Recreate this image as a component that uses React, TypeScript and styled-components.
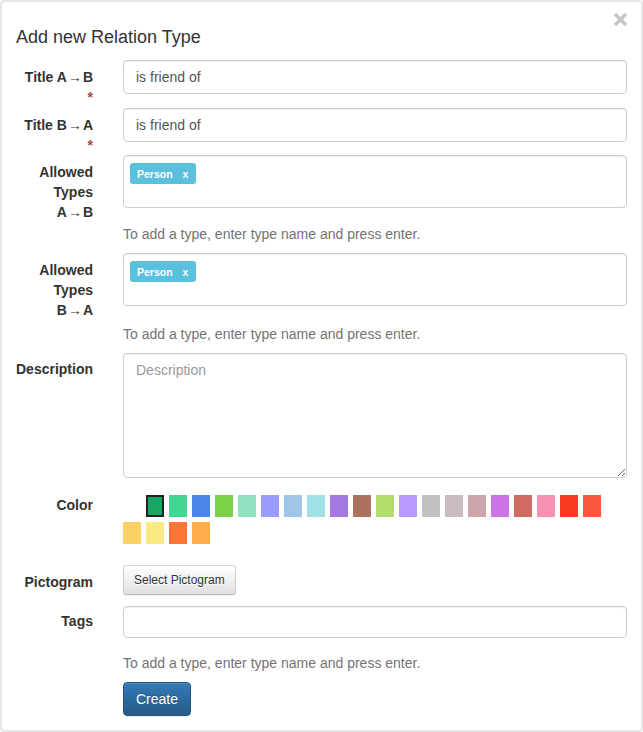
import React from "react";
import styled, { createGlobalStyle } from "styled-components";

const GlobalStyle = createGlobalStyle`
  html, body { margin: 0; padding: 0; background: #fff; }
  body {
    font-family: "Liberation Sans", Arial, Helvetica, sans-serif;
    font-size: 14px;
    line-height: 20px;
    color: #333;
  }
  * { box-sizing: border-box; }
`;

const Modal = styled.div`
  width: 643px;
  border: 2px solid #e6e6e6;
  border-radius: 4px;
  background: #fff;
  padding: 0 14px 14px 14px;
`;

const Header = styled.div`
  display: flex;
  flex-direction: column;
`;

const CloseButton = styled.button`
  align-self: flex-end;
  margin: 10px -1px 0 0;
  padding: 0;
  border: 0;
  background: transparent;
  width: 15px;
  height: 15px;
  display: flex;
  cursor: pointer;
`;

const Title = styled.h4`
  margin: 0;
  font-size: 18px;
  font-weight: 400;
  line-height: 20px;
  color: #333;
`;

const Form = styled.form`
  margin-top: 13px;
  display: flex;
  flex-direction: column;
`;

const Row = styled.div<{ $mb: number }>`
  display: grid;
  grid-template-columns: 77px 1fr;
  column-gap: 30px;
  margin-bottom: ${(p) => p.$mb}px;
`;

const Label = styled.label<{ $pt: number }>`
  display: block;
  padding-top: ${(p) => p.$pt}px;
  text-align: right;
  font-weight: 700;
  font-size: 14px;
  line-height: 20px;
  color: #333;
`;

const Direction = styled.span`
  white-space: nowrap;
`;

const Arrow = styled.span`
  padding: 0 1px;
`;

const Required = styled.span`
  display: block;
  color: #a94442;
  font-weight: 700;
`;

const Field = styled.div`
  display: flex;
  flex-direction: column;
  min-width: 0;
`;

const TextInput = styled.input<{ $h?: number }>`
  width: 100%;
  height: ${(p) => p.$h ?? 34}px;
  padding: 6px 12px;
  font-family: inherit;
  font-size: 14px;
  color: #555;
  background: #fff;
  border: 1px solid #ccc;
  border-radius: 4px;
  box-shadow: inset 0 1px 1px rgba(0, 0, 0, 0.075);
  outline: none;
`;

const TextArea = styled.textarea`
  width: 100%;
  height: 125px;
  padding: 6px 12px;
  font-family: inherit;
  font-size: 14px;
  line-height: 20px;
  color: #555;
  border: 1px solid #ccc;
  border-radius: 4px;
  box-shadow: inset 0 1px 1px rgba(0, 0, 0, 0.075);
  outline: none;
  resize: vertical;
  display: block;
  &::placeholder { color: #999; }
`;

const TagBox = styled.div`
  height: 53px;
  border: 1px solid #ccc;
  border-radius: 4px;
  box-shadow: inset 0 1px 1px rgba(0, 0, 0, 0.075);
  padding: 7px 6px;
  display: flex;
  align-items: flex-start;
  flex-wrap: wrap;
`;

const Tag = styled.span`
  display: inline-flex;
  align-items: center;
  height: 21px;
  padding: 0 8px 0 7px;
  background: #5bc0de;
  color: #fff;
  font-size: 10.5px;
  font-weight: 700;
  border-radius: 3px;
`;

const TagRemove = styled.span`
  margin-left: 10px;
  font-weight: 700;
`;

const Help = styled.p<{ $mt: number }>`
  margin: ${(p) => p.$mt}px 0 0 0;
  color: #737373;
  font-size: 14px;
  line-height: 20px;
`;

const Swatches = styled.div`
  display: flex;
  flex-wrap: wrap;
`;

const Swatch = styled.span<{ $color: string; $selected?: boolean }>`
  width: 18px;
  height: 22px;
  margin: 0 5px 5px 0;
  background: ${(p) => p.$color};
  box-shadow: ${(p) => (p.$selected ? "inset 0 0 0 2px #222" : "none")};
  cursor: pointer;
`;

const DefaultButton = styled.button`
  align-self: flex-start;
  height: 30px;
  padding: 5px 10px;
  font-family: inherit;
  font-size: 12px;
  line-height: 18px;
  color: #333;
  background: linear-gradient(to bottom, #fff 0, #e0e0e0 100%);
  border: 1px solid #ccc;
  border-color: #dbdbdb #ccc #bbb;
  border-radius: 3px;
  text-shadow: 0 1px 0 #fff;
  box-shadow: inset 0 1px 0 rgba(255, 255, 255, 0.15), 0 1px 1px rgba(0, 0, 0, 0.075);
  cursor: pointer;
`;

const PrimaryButton = styled.button`
  align-self: flex-start;
  margin-top: 9px;
  height: 34px;
  padding: 6px 12px;
  font-family: inherit;
  font-size: 14px;
  line-height: 20px;
  color: #fff;
  background: linear-gradient(to bottom, #337ab7 0, #265a88 100%);
  border: 1px solid #245580;
  border-radius: 4px;
  text-shadow: 0 -1px 0 rgba(0, 0, 0, 0.2);
  box-shadow: inset 0 1px 0 rgba(255, 255, 255, 0.15), 0 1px 1px rgba(0, 0, 0, 0.075);
  cursor: pointer;
`;

const COLORS = [
  "transparent",
  "#16a765", "#42d692", "#4986e7", "#7bd148", "#92e1c0", "#9a9cff", "#9fc6e7",
  "#9fe1e7", "#a47ae2", "#ac725e", "#b3dc6c", "#b99aff", "#c2c2c2", "#cabdbf",
  "#cca6ac", "#cd74e6", "#d06b64", "#f691b2", "#f83a22", "#fa573c", "#fad165",
  "#fbe983", "#ff7537", "#ffad46",
];

const HELP = "To add a type, enter type name and press enter.";

const Dir = ({ from, to }: { from: string; to: string }) => (
  <Direction>
    {from}
    <Arrow>→</Arrow>
    {to}
  </Direction>
);

export default function App() {
  return (
    <>
      <GlobalStyle />
      <Modal>
        <Header>
          <CloseButton type="button" aria-label="Close">
            <svg width="15" height="15" viewBox="0 0 15 15">
              <path d="M2 2 L13 13 M13 2 L2 13" stroke="#c6c6c6" strokeWidth="3.6" strokeLinecap="butt" />
            </svg>
          </CloseButton>
          <Title>Add new Relation Type</Title>
        </Header>
        <Form onSubmit={(e) => e.preventDefault()}>
          <Row $mb={1}>
            <Label $pt={7}>
              Title <Dir from="A" to="B" />
              <Required>*</Required>
            </Label>
            <Field>
              <TextInput defaultValue="is friend of" />
            </Field>
          </Row>
          <Row $mb={0}>
            <Label $pt={7}>
              Title <Dir from="B" to="A" />
              <Required>*</Required>
            </Label>
            <Field>
              <TextInput defaultValue="is friend of" />
            </Field>
          </Row>
          <Row $mb={9}>
            <Label $pt={7}>
              Allowed Types <Dir from="A" to="B" />
            </Label>
            <Field>
              <TagBox>
                <Tag>
                  Person<TagRemove>x</TagRemove>
                </Tag>
              </TagBox>
              <Help $mt={16}>{HELP}</Help>
            </Field>
          </Row>
          <Row $mb={9}>
            <Label $pt={7}>
              Allowed Types <Dir from="B" to="A" />
            </Label>
            <Field>
              <TagBox>
                <Tag>
                  Person<TagRemove>x</TagRemove>
                </Tag>
              </TagBox>
              <Help $mt={18}>{HELP}</Help>
            </Field>
          </Row>
          <Row $mb={17}>
            <Label $pt={6}>Description</Label>
            <Field>
              <TextArea placeholder="Description" />
            </Field>
          </Row>
          <Row $mb={16}>
            <Label $pt={0}>Color</Label>
            <Swatches>
              {COLORS.map((c, i) => (
                <Swatch key={i} $color={c} $selected={i === 1} />
              ))}
            </Swatches>
          </Row>
          <Row $mb={11}>
            <Label $pt={7}>Pictogram</Label>
            <Field>
              <DefaultButton type="button">Select Pictogram</DefaultButton>
            </Field>
          </Row>
          <Row $mb={0}>
            <Label $pt={5}>Tags</Label>
            <Field>
              <TextInput $h={32} />
              <Help $mt={15}>{HELP}</Help>
              <PrimaryButton type="submit">Create</PrimaryButton>
            </Field>
          </Row>
        </Form>
      </Modal>
    </>
  );
}
